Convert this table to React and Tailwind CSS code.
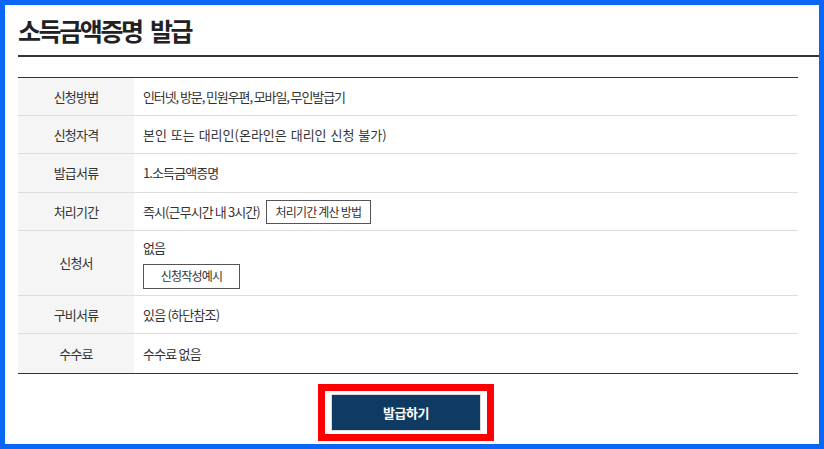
import React from "react";

const rows = [
  { label: "신청방법", h: "h-[38px]", track: "tracking-[-1.1px]", value: "인터넷, 방문, 민원우편, 모바일, 무인발급기" },
  { label: "신청자격", h: "h-[38px]", track: "tracking-[0px] [word-spacing:1px]", value: "본인 또는 대리인(온라인은 대리인 신청 불가)" },
  { label: "발급서류", h: "h-[39px]", track: "tracking-[-0.9px]", value: "1.소득금액증명" },
  { label: "처리기간", h: "h-[38px]", track: "tracking-[-0.9px]", value: "처리기간" },
  { label: "신청서", h: "h-[65px]", track: "tracking-[-0.9px]", value: "신청서" },
  { label: "구비서류", h: "h-[38px]", track: "tracking-[-0.8px]", value: "있음 (하단참조)" },
  { label: "수수료", h: "h-[40px]", track: "tracking-[-0.8px]", value: "수수료 없음" },
];

const SmallButton = ({ children, className = "" }) => (
  <button
    className={`border border-[#555] bg-white text-[12px] text-[#333] tracking-[-0.8px] flex items-center justify-center ${className}`}
  >
    {children}
  </button>
);

const renderValue = (row) => {
  if (row.label === "처리기간") {
    return (
      <div className="flex items-center gap-[6px]">
        <span>즉시(근무시간 내 3시간)</span>
        <SmallButton className="w-[105px] h-[24px]">처리기간 계산 방법</SmallButton>
      </div>
    );
  }
  if (row.label === "신청서") {
    return (
      <div className="flex flex-col items-start gap-[6px] pt-[1px]">
        <span>없음</span>
        <SmallButton className="w-[97px] h-[25px]">신청작성예시</SmallButton>
      </div>
    );
  }
  return <span>{row.value}</span>;
};

export default function App() {
  return (
    <div
      className="w-[824px] h-[449px] border-[5px] border-[#0a66f6] bg-white pl-[13px] overflow-hidden"
      style={{ fontFamily: '"Noto Sans CJK KR", "Noto Sans", sans-serif' }}
    >
      {/* title */}
      <div className="h-[50px] flex items-center">
        <h1 className="text-[25px] font-bold text-[#222] tracking-[-2.4px] [word-spacing:5px] leading-none">
          소득금액증명 발급
        </h1>
      </div>
      <div className="h-[2px] bg-[#333]" />

      {/* info table */}
      <div className="mt-[20px] mr-[21px]">
        <div className="border-t border-[#333]">
          {rows.map((row, i) => (
            <div
              key={row.label}
              className={`flex ${row.h} border-b ${i === rows.length - 1 ? "border-[#333]" : "border-[#ddd]"}`}
            >
              <div className="w-[116px] shrink-0 bg-[#f5f5f5] flex items-center justify-center text-[13px] text-[#333] tracking-[-0.8px]">
                {row.label}
              </div>
              <div className={`flex-1 flex items-center pl-[9px] text-[13px] text-[#333] ${row.track}`}>
                {renderValue(row)}
              </div>
            </div>
          ))}
        </div>

        {/* issue button */}
        <div className="flex justify-center mt-[10px] pr-[4px]">
          <div className="border-[7px] border-[#ff0000] px-[6px] py-[3px]">
            <button className="w-[150px] h-[37px] bg-[#0f3a62] text-white text-[13px] font-bold tracking-[-0.5px] border border-[#d8dde3]">
              발급하기
            </button>
          </div>
        </div>
      </div>
    </div>
  );
}
